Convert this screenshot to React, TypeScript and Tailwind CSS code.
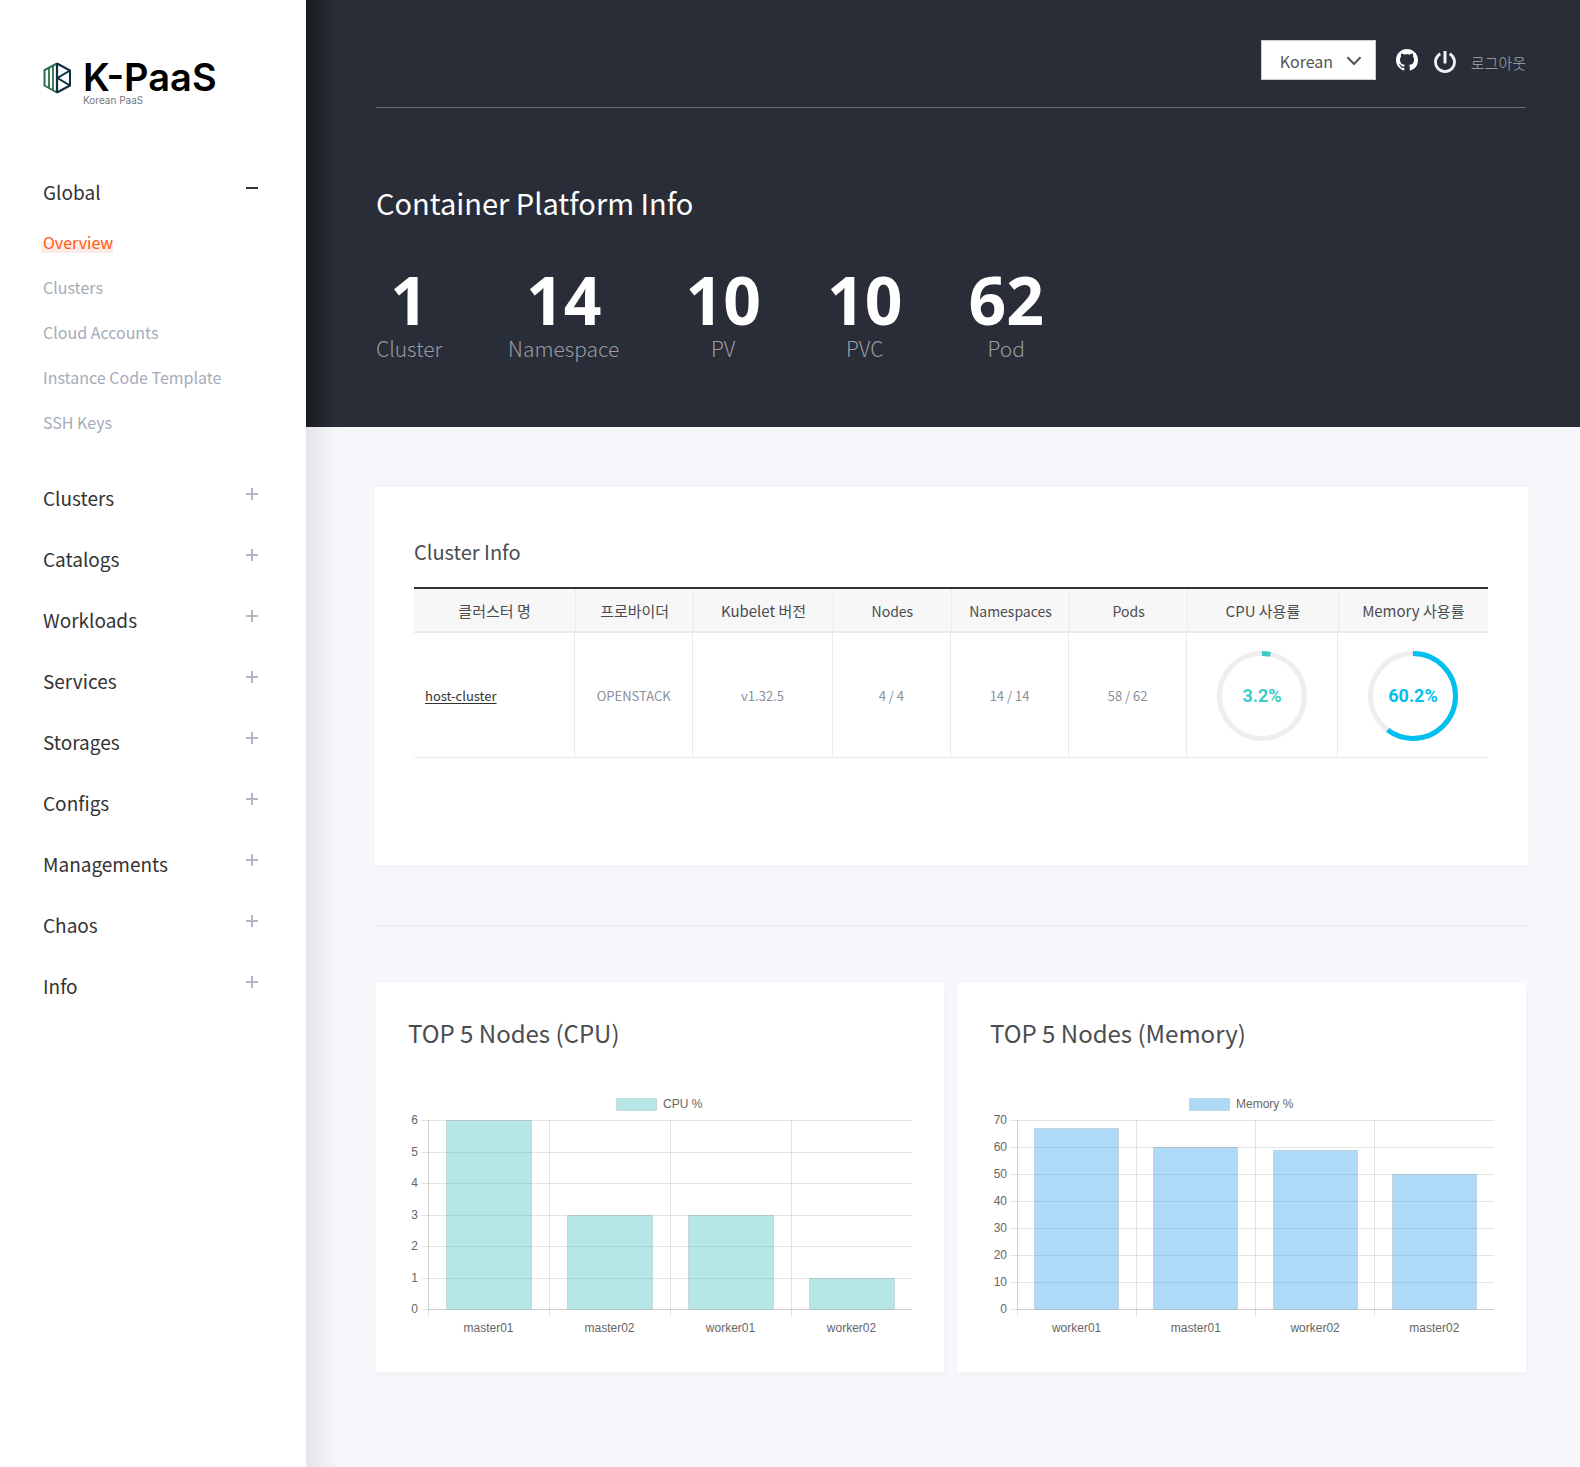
const subMenu = ['Overview', 'Clusters', 'Cloud Accounts', 'Instance Code Template', 'SSH Keys'];
const menu = ['Clusters', 'Catalogs', 'Workloads', 'Services', 'Storages', 'Configs', 'Managements', 'Chaos', 'Info'];

const stats = [
  { label: 'Cluster', value: 1 },
  { label: 'Namespace', value: 14 },
  { label: 'PV', value: 10 },
  { label: 'PVC', value: 10 },
  { label: 'Pod', value: 62 },
];

const columns = [
  { label: '클러스터 명', style: 'w-[15%] text-[15px]' },
  { label: '프로바이더', style: 'w-[11%] text-[15px]' },
  { label: 'Kubelet 버전', style: 'w-[13%] text-[15px]' },
  { label: 'Nodes', style: 'w-[11%] text-sm' },
  { label: 'Namespaces', style: 'w-[11%] text-sm' },
  { label: 'Pods', style: 'w-[11%] text-sm' },
  { label: 'CPU 사용률', style: 'w-[14%] text-[15px]' },
  { label: 'Memory 사용률', style: 'w-[14%] text-[15px]' },
];

function LogoMark() {
  return (
    <svg width="28" height="32" viewBox="0 0 28 32" fill="none" strokeWidth="1.8" aria-hidden="true">
      <path d="M14 1.500 1.500 8v15.500l12.500 7" stroke="#2c6e49" strokeWidth="2" />
      <path d="M6 6v19.500M10 4v24" stroke="#2c6e49" />
      <path d="M14 1v30" stroke="#0b3040" strokeWidth="2.200" />
      <path d="M14 1.500 27 8.500v15l-13 7" stroke="#0b3040" strokeWidth="2" strokeLinejoin="round" />
      <path d="M27 8.500 14.500 16 27 23.500" stroke="#0b3040" strokeWidth="2" />
    </svg>
  );
}

function Toggle({ open }: { open?: boolean }) {
  return (
    <svg
      className={open ? 'mt-2 text-[#333]' : 'mt-2 text-[#b3b8c5]'}
      width="12"
      height="12"
      viewBox="0 0 12 12"
      stroke="currentColor"
      strokeWidth="2"
      aria-hidden="true"
    >
      <path d={open ? 'M0 6h12' : 'M0 6h12M6 0v12'} />
    </svg>
  );
}

function Sidebar() {
  return (
    <aside className="w-[306px] shrink-0 bg-white pl-[43px] pr-12">
      <a href="#home" className="flex gap-3 pt-[58px]">
        <span className="mt-1">
          <LogoMark />
        </span>
        <span className="flex flex-col font-[Inter,sans-serif]">
          <span className="text-[38px] font-semibold leading-[38px] text-black">K-PaaS</span>
          <span className="text-[10px] leading-2 text-[#777]">Korean PaaS</span>
        </span>
      </a>
      <nav className="mt-[70px] flex flex-col gap-[25px]">
        <div>
          <button type="button" aria-expanded="true" className="flex h-9 w-full items-start justify-between text-left text-[19px] leading-9 text-[#333]">
            Global
            <Toggle open />
          </button>
          <ul className="pb-[11px] pt-[9px]">
            {subMenu.map((item, i) => (
              <li key={item} className="flex h-[45px] items-center">
                {i === 0 ? (
                  <a
                    href="#overview"
                    aria-current="page"
                    className="-ml-0.5 bg-[linear-gradient(to_top,#ffebe5_11px,transparent_11px)] pl-0.5 leading-[22px] text-[#ff5a14]"
                  >
                    {item}
                  </a>
                ) : (
                  <a href="#menu" className="leading-[22px] text-[#a5abb9]">
                    {item}
                  </a>
                )}
              </li>
            ))}
          </ul>
        </div>
        {menu.map((item) => (
          <button key={item} type="button" aria-expanded="false" className="flex h-9 items-start justify-between text-left text-[19px] leading-9 text-[#333]">
            {item}
            <Toggle />
          </button>
        ))}
      </nav>
    </aside>
  );
}

function Header() {
  return (
    <header className="bg-[#292d37] bg-[linear-gradient(to_right,rgba(0,0,0,0.38),transparent_30px)] pb-[63px] pl-[70px] pr-[54px] pt-10">
      <div className="flex items-center justify-end border-b border-[#666a73] pb-[27px]">
        <div className="relative mr-5">
          <select
            aria-label="Language"
            className="block h-10 w-[115px] appearance-none border border-[#ccc] bg-white pl-[18px] pt-0.5 text-base text-[#555]"
          >
            <option>Korean</option>
            <option>English</option>
          </select>
          <svg className="pointer-events-none absolute right-[14px] top-4" width="16" height="10" viewBox="0 0 16 10" fill="none" stroke="#555" strokeWidth="2" aria-hidden="true">
            <path d="m1.500 1.200 6.500 6.800 6.500-6.800" />
          </svg>
        </div>
        <a href="#github" aria-label="GitHub" className="mr-4 text-white">
          <svg width="22" height="22" viewBox="0 0 16 16" fill="currentColor" aria-hidden="true">
            <path d="M8 0C3.58 0 0 3.58 0 8c0 3.54 2.290 6.530 5.470 7.590.4.070.550-.170.550-.380 0-.190-.010-.820-.010-1.490-2.010.370-2.530-.490-2.690-.940-.090-.230-.480-.940-.820-1.130-.280-.150-.680-.520-.010-.530.630-.010 1.080.580 1.230.820.720 1.210 1.870.870 2.330.660.070-.520.280-.870.510-1.070-1.780-.200-3.640-.890-3.640-3.950 0-.870.310-1.590.820-2.150-.080-.200-.360-1.020.080-2.120 0 0 .670-.210 2.200.820.640-.180 1.320-.270 2-.270s1.360.090 2 .270c1.530-1.040 2.200-.820 2.200-.820.440 1.100.160 1.920.080 2.120.510.560.820 1.270.820 2.150 0 3.070-1.870 3.750-3.650 3.950.290.250.540.730.540 1.480 0 1.070-.010 1.930-.010 2.200 0 .210.150.460.550.380A8.013 8.013 0 0 0 16 8c0-4.420-3.580-8-8-8z" />
          </svg>
        </a>
        <a href="#logout" className="flex items-center gap-[15px] pt-1 text-[15px] font-light leading-[22px] text-[#a9abaf]">
          <svg width="22" height="22" viewBox="0 0 22 22" fill="none" stroke="#eef0fa" strokeWidth="2.800" aria-hidden="true">
            <path d="M6.300 2.800a9.500 9.500 0 1 0 9.400 0" />
            <path d="M11 0v12.500" strokeWidth="3" />
          </svg>
          <span className="pt-0.5">로그아웃</span>
        </a>
      </div>
      <h1 className="mt-[74px] text-[29px] leading-10 text-white">Container Platform Info</h1>
      <dl className="mt-11 flex gap-[66px]">
        {stats.map((s) => (
          <div key={s.label} className="flex flex-col-reverse items-center">
            <dt className="text-[21px] font-light leading-8 text-[#9a9ca2]">{s.label}</dt>
            <dd className="font-['Noto_Sans',sans-serif] text-[66px] font-bold leading-[66px] text-white">{s.value}</dd>
          </div>
        ))}
      </dl>
    </header>
  );
}

function Donut({ value, color }: { value: number; color: string }) {
  return (
    <svg className="mx-auto" width="90" height="90" viewBox="0 0 90 90" fill="none" strokeWidth="5" role="img" aria-label={value + '%'}>
      <circle cx="45" cy="45" r="42.5" stroke="#eee" />
      <circle cx="45" cy="45" r="42.5" stroke={color} pathLength="100" strokeDasharray={value + ' 100'} transform="rotate(-90 45 45)" />
      <text x="45" y="51" textAnchor="middle" fill={color} className="font-[Roboto,sans-serif] text-lg font-bold">
        {value}%
      </text>
    </svg>
  );
}

function ClusterInfo() {
  const cells = ['OPENSTACK', 'v1.32.5', '4 / 4', '14 / 14', '58 / 62'];
  return (
    <section className="bg-white px-10 pb-[107px] pt-[49px] shadow-[0_0_2px_rgba(0,0,0,0.04)]">
      <h2 className="mb-[19px] text-xl leading-8 text-[#4b4c50]">Cluster Info</h2>
      <table className="w-full table-fixed border-separate border-spacing-0 border-t-2 border-[#333] text-center">
        <thead>
          <tr className="h-11 bg-[#f7f7f7]">
            {columns.map((c) => (
              <th key={c.label} scope="col" className={'border-b-2 border-l border-[#eaeaea] p-0 pt-0.5 font-normal text-[#4b4c50] first:border-l-0 ' + c.style}>
                {c.label}
              </th>
            ))}
          </tr>
        </thead>
        <tbody>
          <tr className="h-[125px] text-[13px] text-[#8a8f9c] *:border-b *:border-r *:border-[#eaeaea] *:p-0 *:pt-0.5 *:last:border-r-0">
            <td className="text-left">
              <a href="#host-cluster" className="ml-[11px] text-[#333] underline underline-offset-2">
                host-cluster
              </a>
            </td>
            {cells.map((c) => (
              <td key={c}>{c}</td>
            ))}
            <td>
              <Donut value={3.2} color="#3bcbc8" />
            </td>
            <td>
              <Donut value={60.2} color="#00c0f0" />
            </td>
          </tr>
        </tbody>
      </table>
    </section>
  );
}

type ChartProps = {
  title: string;
  legend: string;
  fill: string;
  max: number;
  step: number;
  left: number;
  legendX: number;
  data: { name: string; value: number }[];
};

const TOP = 33;
const BOTTOM = 222;
const RIGHT = 504;

function BarChart({ title, legend, fill, max, step, left, legendX, data }: ChartProps) {
  const slot = (RIGHT - left) / data.length;
  const y = (v: number) => Math.round(BOTTOM - (v / max) * (BOTTOM - TOP)) + 0.5;
  const ticks = Array.from({ length: max / step + 1 }, (_, i) => i * step);
  return (
    <section className="bg-white px-8 pb-8 pt-8 shadow-[3px_5px_6px_rgba(0,0,0,0.02)]">
      <h2 className="mb-9 text-2xl leading-9 text-[#4b4c50]">{title}</h2>
      <svg viewBox="0 0 504 253" className="w-full font-['Liberation_Sans',sans-serif] text-xs" role="img" aria-label={title}>
        <rect x={legendX + 0.5} y="11.5" width="40" height="12" fill={fill} stroke="rgba(0,0,0,0.1)" />
        <text x={legendX + 47} y="21" fill="#666">
          {legend}
        </text>
        {ticks.map((t) => (
          <g key={t}>
            <path d={`M${left - 7} ${y(t)}H${RIGHT}`} stroke="rgba(0,0,0,0.1)" />
            <text x={left - 10} y={y(t) + 3.5} textAnchor="end" fill="#666">
              {t}
            </text>
          </g>
        ))}
        {data.map((d, i) => (
          <path key={d.name} d={`M${Math.floor(left + slot * i) + 0.5} ${TOP}V${BOTTOM + 8}`} stroke="rgba(0,0,0,0.1)" />
        ))}
        <path d={`M${left + 0.5} ${TOP}V${BOTTOM + 0.5}H${RIGHT}`} fill="none" stroke="rgba(0,0,0,0.1)" />
        {data.map((d, i) => {
          const w = Math.round(slot * 0.72) - 2;
          const x = Math.floor(left + slot * i + (slot - w) / 2) + 0.5;
          return (
            <g key={d.name}>
              <rect x={x} y={y(d.value)} width={w} height={BOTTOM + 0.5 - y(d.value)} fill={fill} />
              <path d={`M${x} ${BOTTOM}V${y(d.value)}h${w}V${BOTTOM}`} fill="none" stroke="rgba(0,0,0,0.1)" />
              <text x={left + slot * (i + 0.5)} y="245" textAnchor="middle" fill="#666">
                {d.name}
              </text>
            </g>
          );
        })}
      </svg>
    </section>
  );
}

export default function App() {
  return (
    <div className="flex min-h-screen bg-[#f6f7fb] font-['Noto_Sans_CJK_KR',sans-serif] text-base">
      <Sidebar />
      <main className="min-w-0 flex-1 bg-[linear-gradient(to_right,rgba(0,0,0,0.07),transparent_34px)] pb-[95px]">
        <Header />
        <div className="pl-[68px] pr-[52px] pt-[60px]">
          <ClusterInfo />
          <hr className="mb-[57px] mt-[60px] border-[#e8e9ee]" />
          <div className="grid grid-cols-2 gap-[14px] px-0.5">
            <BarChart
              title="TOP 5 Nodes (CPU)"
              legend="CPU %"
              fill="rgba(75,192,192,0.4)"
              max={6}
              step={1}
              left={20}
              legendX={208}
              data={[
                { name: 'master01', value: 6 },
                { name: 'master02', value: 3 },
                { name: 'worker01', value: 3 },
                { name: 'worker02', value: 1 },
              ]}
            />
            <BarChart
              title="TOP 5 Nodes (Memory)"
              legend="Memory %"
              fill="rgba(54,162,235,0.4)"
              max={70}
              step={10}
              left={27}
              legendX={199}
              data={[
                { name: 'worker01', value: 67 },
                { name: 'master01', value: 60 },
                { name: 'worker02', value: 59 },
                { name: 'master02', value: 50 },
              ]}
            />
          </div>
        </div>
      </main>
    </div>
  );
}
